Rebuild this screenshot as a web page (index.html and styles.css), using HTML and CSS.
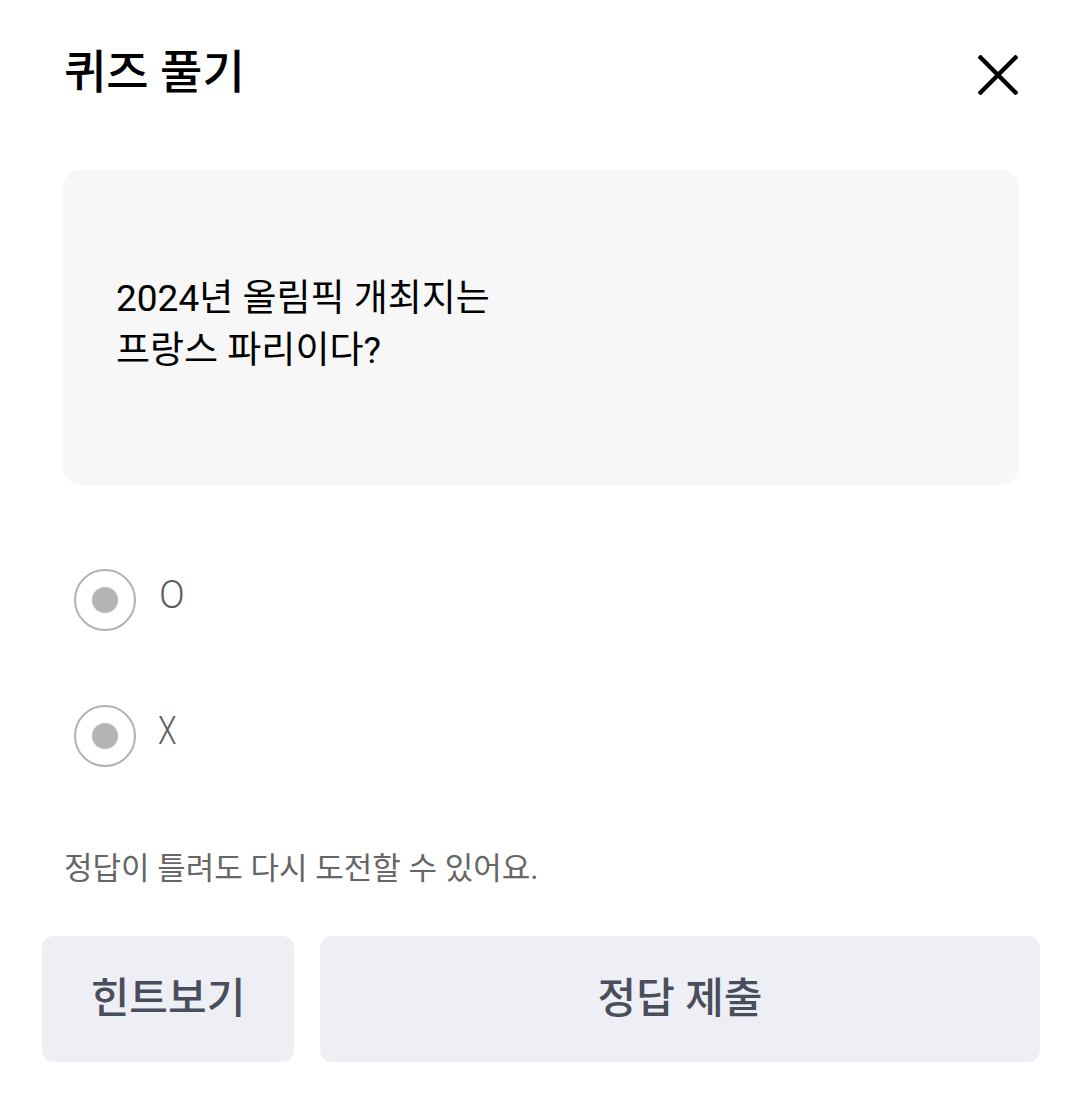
FILE: index.html
```html
<!DOCTYPE html>
<html lang="ko">
<head>
<meta charset="utf-8">
<link rel="stylesheet" href="styles.css">
</head>
<body>
<div class="sheet">
  <header class="header">
    <h1 class="title">퀴즈 풀기</h1>
    <button class="close" aria-label="닫기">
      <svg width="40" height="40" viewBox="0 0 40 40"><path d="M1 1L39 39M39 1L1 39" stroke="#000" stroke-width="4.4" fill="none"/></svg>
    </button>
  </header>
  <section class="question">
    <p class="question-text">2024년 올림픽 개최지는<br>프랑스 파리이다?</p>
  </section>
  <div class="options">
    <label class="option"><span class="radio"><span class="dot"></span></span><span class="option-label">O</span></label>
    <label class="option"><span class="radio"><span class="dot"></span></span><span class="option-label x">X</span></label>
  </div>
  <p class="helper">정답이 틀려도 다시 도전할 수 있어요.</p>
  <div class="actions">
    <button class="btn btn-hint">힌트보기</button>
    <button class="btn btn-submit">정답 제출</button>
  </div>
</div>
</body>
</html>
```
FILE: styles.css
```css
* { box-sizing: border-box; }
html, body { margin: 0; padding: 0; background: #fff; }
body {
  font-family: Roboto, "Noto Sans CJK KR", sans-serif;
  width: 1080px;
  height: 1101px;
  overflow: hidden;
}
.sheet {
  display: flex;
  flex-direction: column;
}
.header {
  display: flex;
  align-items: center;
  justify-content: space-between;
  height: 66px;
  margin-top: 40px;
  padding: 0 62px 0 64px;
}
.title {
  margin: 0;
  font-size: 46px;
  font-weight: 500;
  color: #000;
  line-height: 66px;
  margin-top: -2px;
}
.close {
  border: 0;
  background: none;
  padding: 0;
  width: 40px;
  height: 40px;
  display: flex;
  margin-top: 4px;
}
.question {
  margin: 64px 61px 0 63px;
  height: 315px;
  background: #f7f7f7;
  border-radius: 18px;
  display: flex;
  align-items: center;
  padding-left: 53px;
}
.question-text {
  margin: -6px 0 0;
  font-size: 37px;
  line-height: 52px;
  color: #000;
}
.options {
  display: flex;
  flex-direction: column;
  gap: 74px;
  margin-top: 84px;
  padding-left: 74px;
}
.option {
  display: flex;
  align-items: center;
  height: 62px;
  gap: 23px;
}
.radio {
  width: 62px;
  height: 62px;
  border: 2px solid #b2b2b2;
  border-radius: 50%;
  display: flex;
  align-items: center;
  justify-content: center;
}
.dot {
  width: 26px;
  height: 26px;
  border-radius: 50%;
  background: #b5b5b5;
}
.option-label {
  font-size: 38px;
  font-weight: 300;
  color: #5f5f5f;
  line-height: 1;
  margin-top: -10px;
}
.option-label.x {
  display: inline-block;
  transform: scaleX(0.8);
  transform-origin: left center;
  margin-left: -1px;
}
.helper {
  margin: 82px 0 0 64px;
  font-size: 31px;
  line-height: 40px;
  color: #666;
}
.actions {
  display: flex;
  gap: 26px;
  margin-top: 47px;
  padding: 0 40px 0 42px;
}
.btn {
  border: 0;
  height: 126px;
  border-radius: 12px;
  background: #eeeff4;
  color: #4a4e5c;
  font-family: Roboto, "Noto Sans CJK KR", sans-serif;
  font-size: 42px;
  font-weight: 500;
  padding: 0 0 10px;
}
.btn-hint { width: 252px; }
.btn-submit { flex: 1; }
```
